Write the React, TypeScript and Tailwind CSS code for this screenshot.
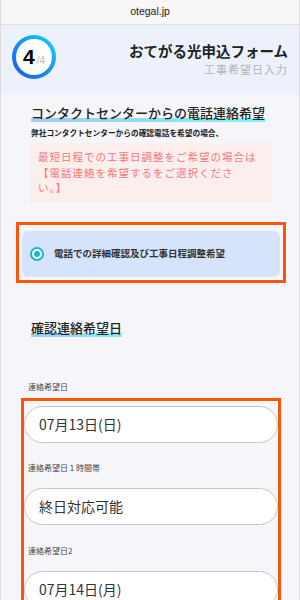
const jp = "font-['Noto_Sans_CJK_JP','Noto_Sans',sans-serif]";

function Marker({ children }: { children: React.ReactNode }) {
  return (
    <span className="bg-[linear-gradient(90deg,#a3cbf5,#7ff0f8)] bg-no-repeat bg-bottom bg-[length:100%_4px]">
      {children}
    </span>
  );
}

function Field({ value }: { value: string }) {
  return (
    <div className="flex h-[37px] items-center rounded-full border border-[#c6c6c6] bg-white pl-[14px] text-[14px] text-[#333]">
      {value}
    </div>
  );
}

export default function App() {
  return (
    <div className={`${jp} h-[600px] w-[300px] overflow-hidden border-x border-[#dcdcdc] bg-[#f6f6fa]`}>
      {/* browser bar */}
      <div className="flex h-[25px] items-center justify-center border-b border-[#e2e2e2] bg-[#f7f7f7] font-['Liberation_Sans',sans-serif] text-[10.5px] text-[#222]">
        otegal.jp
      </div>

      {/* header */}
      <div className="flex h-[70px] items-start justify-between bg-[#ecf1fb] pl-[11px] pr-[11px]">
        <div className="mt-[10px] h-[44px] w-[44px] rounded-full bg-linear-to-tr from-[#1c58ea] via-[#1a8ff4] to-[#1ad8ff] p-[4px]">
          <div className="flex h-full w-full items-baseline justify-center rounded-full bg-white pt-[6px]">
            <span className="font-['Liberation_Sans',sans-serif] text-[21px] font-bold leading-[24px] text-black">4</span>
            <span className="ml-[2px] font-['Liberation_Sans',sans-serif] text-[10px] text-[#bbb]">/4</span>
          </div>
        </div>
        <div className="mt-[17px] flex flex-col items-end">
          <div className="text-[14.5px] font-bold leading-[18px] text-[#222]">おてがる光申込フォーム</div>
          <div className="mt-[2px] text-[11px] leading-[14px] tracking-[1px] text-[#b4b4b4]">工事希望日入力</div>
        </div>
      </div>

      {/* main */}
      <div className="pt-[9px]">
        <div className="pl-[30px] text-[13px] font-medium leading-[18px] text-[#222]">
          <Marker>コンタクトセンターからの電話連絡希望</Marker>
        </div>
        <div className="mt-[5px] pl-[30px] text-[7.7px] font-bold leading-[12px] text-[#222]">
          弊社コンタクトセンターからの確認電話を希望の場合、
        </div>
        <div className="ml-[29px] mt-[4px] w-[242px] bg-[#fdeeee] pb-[7px] pl-[8px] pt-[6px] text-[10.5px] leading-[15.5px] tracking-[1px] text-[#f27a78]">
          最短日程での工事日調整をご希望の場合は
          <br />
          【電話連絡を希望するをご選択くださ
          <br />
          い。】
        </div>

        <div className="ml-[15px] mt-[19px] w-[270px] border-[3px] border-[#fa560a] px-[3px] pb-[3px] pt-[6px]">
          <div className="flex h-[46px] items-center rounded-[6px] bg-[#d5e4fb] pl-[8px]">
            <div className="flex h-[14px] w-[14px] items-center justify-center rounded-full border-2 border-[#1eb3d3] bg-white">
              <div className="h-[6px] w-[6px] rounded-full bg-[#1eb3d3]" />
            </div>
            <span className="ml-[10px] text-[9.5px] font-bold text-[#333]">電話での詳細確認及び工事日程調整希望</span>
          </div>
        </div>

        <div className="mt-[36px] pl-[30px] text-[13px] font-medium leading-[18px] text-[#222]">
          <Marker>確認連絡希望日</Marker>
        </div>

        <div className="mt-[44px] pl-[27px] text-[8px] leading-[12px] text-[#444]">連絡希望日</div>
        <div className="ml-[20px] mr-[18px] mt-[5px] border-[3px] border-b-0 border-[#fa560a] pt-[5px]">
          <Field value="07月13日(日)" />
          <div className="mt-[19px] pl-[4px] text-[8px] leading-[12px] text-[#444]">連絡希望日１時間帯</div>
          <div className="mt-[14px]">
            <Field value="終日対応可能" />
          </div>
          <div className="mt-[20px] pl-[4px] text-[8px] leading-[12px] text-[#444]">連絡希望日2</div>
          <div className="mt-[14px]">
            <Field value="07月14日(月)" />
          </div>
          <div className="h-[40px]" />
        </div>
      </div>
    </div>
  );
}
